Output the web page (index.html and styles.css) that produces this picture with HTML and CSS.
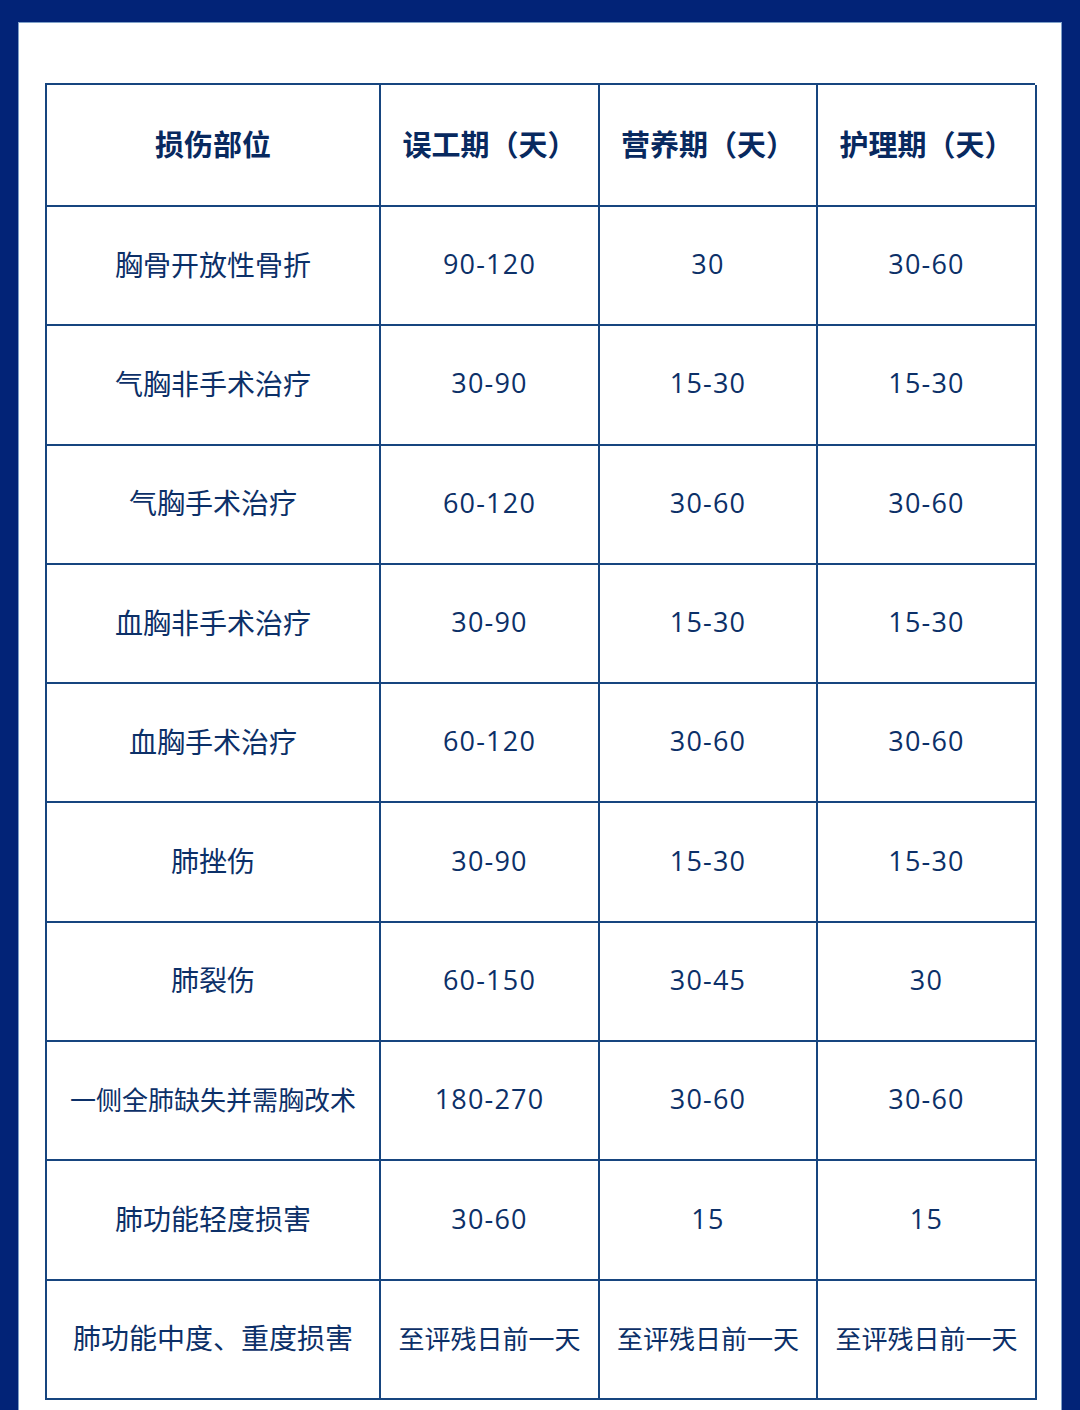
FILE: index.html
```html
<!DOCTYPE html>
<html lang="zh">
<head>
<meta charset="utf-8">
<link rel="stylesheet" href="styles.css">
</head>
<body>
<div class="panel">
  <div class="grid">
    <div class="cell head">损伤部位</div>
    <div class="cell head">误工期（天）</div>
    <div class="cell head">营养期（天）</div>
    <div class="cell head">护理期（天）</div>

    <div class="cell">胸骨开放性骨折</div>
    <div class="cell num">90-120</div>
    <div class="cell num">30</div>
    <div class="cell num">30-60</div>

    <div class="cell">气胸非手术治疗</div>
    <div class="cell num">30-90</div>
    <div class="cell num">15-30</div>
    <div class="cell num">15-30</div>

    <div class="cell">气胸手术治疗</div>
    <div class="cell num">60-120</div>
    <div class="cell num">30-60</div>
    <div class="cell num">30-60</div>

    <div class="cell">血胸非手术治疗</div>
    <div class="cell num">30-90</div>
    <div class="cell num">15-30</div>
    <div class="cell num">15-30</div>

    <div class="cell">血胸手术治疗</div>
    <div class="cell num">60-120</div>
    <div class="cell num">30-60</div>
    <div class="cell num">30-60</div>

    <div class="cell">肺挫伤</div>
    <div class="cell num">30-90</div>
    <div class="cell num">15-30</div>
    <div class="cell num">15-30</div>

    <div class="cell">肺裂伤</div>
    <div class="cell num">60-150</div>
    <div class="cell num">30-45</div>
    <div class="cell num">30</div>

    <div class="cell small">一侧全肺缺失并需胸改术</div>
    <div class="cell num">180-270</div>
    <div class="cell num">30-60</div>
    <div class="cell num">30-60</div>

    <div class="cell">肺功能轻度损害</div>
    <div class="cell num">30-60</div>
    <div class="cell num">15</div>
    <div class="cell num">15</div>

    <div class="cell">肺功能中度、重度损害</div>
    <div class="cell small">至评残日前一天</div>
    <div class="cell small">至评残日前一天</div>
    <div class="cell small">至评残日前一天</div>
  </div>
</div>
</body>
</html>
```

FILE: styles.css
```css
html, body {
  margin: 0;
  padding: 0;
  background: #022377;
  height: 1410px;
  overflow: hidden;
}
.panel {
  margin: 22px 18px 0 18px;
  background: #ffffff;
  height: 1388px;
  padding: 60px 26px 0 26px;
  box-sizing: border-box;
  border: 1px solid #7fa0c8;
  border-bottom: none;
}
.grid {
  display: grid;
  grid-template-columns: 334px 219px 218px 219px;
  grid-template-rows: 122px repeat(10, 119.3px);
  border-top: 2px solid #17457f;
  border-left: 2px solid #17457f;
  width: 990px;
  box-sizing: border-box;
}
.cell {
  box-sizing: border-box;
  border-right: 2px solid #17457f;
  border-bottom: 2px solid #17457f;
  display: flex;
  align-items: center;
  justify-content: center;
  padding-bottom: 4px;
  font-family: "Noto Sans CJK SC", sans-serif;
  font-size: 28px;
  color: #0c3068;
  white-space: nowrap;
}
.head {
  font-weight: 700;
  color: #08295f;
  font-size: 29px;
}
.num {
  font-family: "Open Sans", "Noto Sans CJK SC", sans-serif;
  font-size: 27px;
  letter-spacing: 1.2px;
}
.small {
  font-size: 26px;
}
```
